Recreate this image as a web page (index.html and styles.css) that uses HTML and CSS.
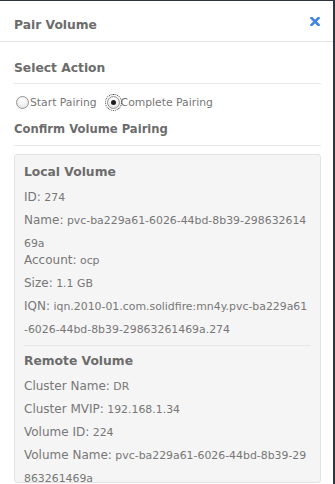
FILE: index.html
```html
<!DOCTYPE html>
<html>
<head>
<meta charset="utf-8">
<link rel="stylesheet" href="styles.css">
</head>
<body>
<div class="modal">
  <div class="modal-header">
    <h3 class="modal-title">Pair Volume</h3>
    <button class="close" aria-label="Close">
      <svg width="10" height="9" viewBox="0 0 10 9"><path d="M1.5 1 L8.5 8 M8.5 1 L1.5 8" stroke="#3f86e3" stroke-width="2.6" stroke-linecap="square" fill="none"/></svg>
    </button>
  </div>
  <div class="modal-body">
    <h4 class="section-title">Select Action</h4>
    <div class="radio-row">
      <label class="radio"><input type="radio" name="action">Start Pairing</label>
      <label class="radio focused"><input type="radio" name="action" checked>Complete Pairing</label>
    </div>
    <h4 class="section-title small">Confirm Volume Pairing</h4>
    <div class="well">
      <h5 class="well-title">Local Volume</h5>
      <div class="item"><span class="lbl">ID:</span> <span class="val">274</span></div>
      <div class="item"><span class="lbl">Name:</span> <span class="val">pvc-ba229a61-6026-44bd-8b39-29863261469a</span></div>
      <div class="item"><span class="lbl">Account:</span> <span class="val">ocp</span></div>
      <div class="item"><span class="lbl">Size:</span> <span class="val">1.1 GB</span></div>
      <div class="item"><span class="lbl">IQN:</span> <span class="val">iqn.2010-01.com.solidfire:mn4y.pvc-ba229a61-6026-44bd-8b39-29863261469a.274</span></div>
      <hr class="divider">
      <h5 class="well-title">Remote Volume</h5>
      <div class="item"><span class="lbl">Cluster Name:</span> <span class="val">DR</span></div>
      <div class="item"><span class="lbl">Cluster MVIP:</span> <span class="val">192.168.1.34</span></div>
      <div class="item"><span class="lbl">Volume ID:</span> <span class="val">224</span></div>
      <div class="item"><span class="lbl">Volume Name:</span> <span class="val">pvc-ba229a61-6026-44bd-8b39-29863261469a</span></div>
    </div>
  </div>
</div>
</body>
</html>
```

FILE: styles.css
```css
html, body {
  margin: 0;
  padding: 0;
  height: 100%;
  background: #2f3541;
  overflow: hidden;
}
body {
  font-family: "DejaVu Sans", Verdana, sans-serif;
  color: #777;
}
.modal {
  margin-top: 1px;
  width: 333px;
  height: 483px;
  background: #fff;
}
.modal-header {
  display: flex;
  justify-content: space-between;
  align-items: flex-start;
  padding: 15px 12px 7px 14px;
  border-bottom: 1px solid #e3e3e3;
}
.modal-title {
  margin: 0;
  font-size: 12.3px;
  line-height: 18px;
  font-weight: bold;
  color: #6c6c6c;
}
.close {
  margin: 1px 1px 0 0;
  padding: 0;
  border: 0;
  background: none;
  width: 10px;
  height: 9px;
  display: flex;
}
.modal-body {
  padding: 0 12px 0 14px;
}
.section-title {
  margin: 17px 0 0;
  padding-bottom: 6px;
  font-size: 12.3px;
  line-height: 18px;
  font-weight: bold;
  color: #6c6c6c;
  border-bottom: 1px solid #e8e8e8;
}
.section-title.small {
  margin-top: 9px;
  padding-bottom: 7px;
  font-size: 11.6px;
}
.radio-row {
  display: flex;
  align-items: center;
  margin-top: 9px;
  height: 18px;
  font-size: 10.8px;
  color: #777;
}
.radio {
  display: flex;
  align-items: center;
}
.radio + .radio {
  margin-left: 10px;
}
.radio input {
  appearance: none;
  -webkit-appearance: none;
  margin: 0 1px 0 2px;
  width: 13px;
  height: 13px;
  border-radius: 50%;
  border: 1px solid #939393;
  background: radial-gradient(circle at 50% 35%, #ffffff 0%, #f3f3f3 45%, #d9d9d9 100%);
  box-sizing: border-box;
  position: relative;
}
.radio input:checked::after {
  content: "";
  position: absolute;
  left: 3px;
  top: 3px;
  width: 5px;
  height: 5px;
  border-radius: 50%;
  background: #1e1e1e;
}
.radio.focused input {
  margin-left: 0;
  outline: 1px dotted #333;
  outline-offset: 1px;
}
.well {
  margin-top: 8px;
  padding: 8px 9px 0 9px;
  background: #f5f5f5;
  border: 1px solid #e3e3e3;
  border-radius: 3px;
  height: 329px;
  box-sizing: border-box;
  overflow: hidden;
}
.well-title {
  margin: 0 0 8px;
  font-size: 12.3px;
  line-height: 18px;
  font-weight: bold;
  color: #6c6c6c;
}
.item {
  line-height: 17px;
  font-size: 10.9px;
  word-break: break-all;
  color: #777;
}
.lbl {
  display: inline-block;
  font-size: 12px;
  margin-bottom: 6px;
}
.val {
  font-size: 10.9px;
}
.divider {
  margin: 7px 0 6px;
  border: 0;
  border-top: 1px solid #e6e6e6;
}
```
